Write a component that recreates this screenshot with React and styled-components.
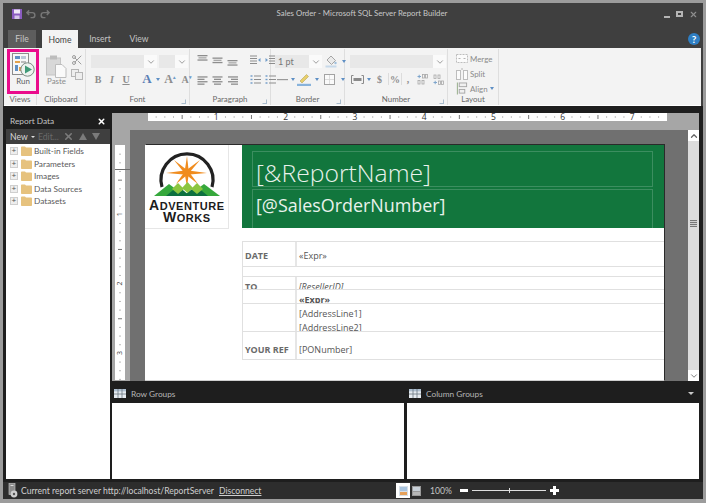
import React from 'react';
import styled, { createGlobalStyle } from 'styled-components';
import { ChevronDown, ChevronUp, Scissors, X } from 'lucide-react';

const UI_FONT = 'Lato, "Noto Sans", sans-serif';
const REPORT_FONT = '"Open Sans", "Noto Sans", sans-serif';

const GlobalStyle = createGlobalStyle`
  html, body { margin: 0; padding: 0; background: #9c9c9c; }
  * { box-sizing: border-box; }
`;

/* ---------- small drawings ---------- */

function SaveIcon() {
  return (
    <svg width="10" height="10" viewBox="0 0 10 10">
      <rect width="10" height="10" fill="#8a5cc0" />
      <rect x="2" y="0.5" width="6" height="4" fill="#efe8f7" />
      <rect x="2.5" y="6.5" width="5" height="3.5" fill="#d6c6ea" />
    </svg>
  );
}

function UndoIcon({ flip }) {
  return (
    <svg width="10" height="10" viewBox="0 0 11 10" style={flip ? { transform: 'scaleX(-1)' } : undefined}>
      <path d="M3.5 1 L1 3.5 L3.5 6 M1.5 3.5 H7 A2.7 2.7 0 0 1 7 9 H5" fill="none" stroke="#777" strokeWidth="1.6" />
    </svg>
  );
}

function RunIcon() {
  return (
    <svg width="23" height="25" viewBox="0 0 23 25">
      <rect x="0.5" y="0.5" width="16" height="21" fill="#f7f7f7" stroke="#8b8b8b" />
      <rect x="3" y="3" width="5" height="3" fill="#5f8fc4" />
      <rect x="9" y="3" width="5" height="3" fill="#b9c7d6" />
      <rect x="3" y="8" width="5" height="2" fill="#e3a24c" />
      <rect x="9" y="8" width="5" height="2" fill="#bdbdbd" />
      <rect x="3" y="12" width="3" height="6" fill="#5f8fc4" />
      <rect x="7" y="14" width="3" height="4" fill="#e3a24c" />
      <circle cx="15.5" cy="16.5" r="6.7" fill="#eef2ef" stroke="#7b8a82" />
      <path d="M13 12.5 L20 16.5 L13 20.5 Z" fill="#3f9a77" />
    </svg>
  );
}

function PasteIcon() {
  return (
    <svg width="21" height="23" viewBox="0 0 21 23">
      <rect x="0.5" y="3" width="14" height="17" fill="#d8d8d8" stroke="#c4c4c4" />
      <rect x="4" y="0.5" width="7" height="4" fill="#bdbdbd" />
      <path d="M9.5 9.5 H16 L20 13.5 V22.5 H9.5 Z" fill="#fafafa" stroke="#bdbdbd" />
    </svg>
  );
}

function CopyIcon() {
  return (
    <svg width="12" height="11" viewBox="0 0 12 11">
      <rect x="0.5" y="0.5" width="7" height="7" fill="#eee" stroke="#b5b5b5" />
      <rect x="4.5" y="3.5" width="7" height="7" fill="#eee" stroke="#b5b5b5" />
    </svg>
  );
}

function AlignIcon({ lines, align = 'left', color = '#8d8d8d' }) {
  const widths = [10, 7, 10, 7];
  return (
    <svg width="11" height="9" viewBox="0 0 11 9">
      {Array.from({ length: lines }).map((_, i) => {
        const w = widths[i];
        const x = align === 'center' ? (11 - w) / 2 : align === 'right' ? 11 - w : 0.5;
        return <rect key={i} x={x} y={i * 2.4 + 0.3} width={w} height="1.3" fill={color} />;
      })}
    </svg>
  );
}

/* vertical alignment buttons: a bar pair sitting high, centred or low in its cell */
function ValignIcon({ offset }) {
  return (
    <svg width="11" height="13" viewBox="0 0 11 13">
      <rect x="0.5" y={offset} width="10" height="1.3" fill="#8d8d8d" />
      <rect x="1.5" y={offset + 2.2} width="8" height="1.3" fill="#a8a8a8" />
      <rect x="0.5" y={offset + 4.4} width="10" height="1.3" fill="#8d8d8d" />
    </svg>
  );
}

function ListIcon({ color = '#8d8d8d' }) {
  return (
    <svg width="11" height="10" viewBox="0 0 11 10">
      {[1, 4.5, 8].map(y => (
        <g key={y}>
          <rect x="0.5" y={y - 0.7} width="2" height="1.4" fill="#6f9bc8" />
          <rect x="4" y={y - 0.5} width="7" height="1" fill={color} />
        </g>
      ))}
    </svg>
  );
}

function IndentIcon({ flip }) {
  return (
    <svg width="11" height="10" viewBox="0 0 11 10" style={flip ? { transform: 'scaleX(-1)' } : undefined}>
      {[1, 3.5, 6, 8.5].map(y => (
        <rect key={y} x="4" y={y - 0.5} width="7" height="1" fill="#8d8d8d" />
      ))}
      <path d="M0.5 3 L3 5 L0.5 7 Z" fill="#6f9bc8" />
    </svg>
  );
}

function BucketIcon() {
  return (
    <svg width="12" height="13" viewBox="0 0 12 13">
      <path d="M2 5 L6 1 L10.5 5.5 L6.5 9.5 Z" fill="#eaeaea" stroke="#a5a5a5" />
      <circle cx="10.5" cy="8" r="1.2" fill="#9fc0dd" />
      <rect x="0.5" y="10.5" width="11" height="2" fill="#c7d9ea" />
    </svg>
  );
}

function LineIcon() {
  return (
    <svg width="11" height="5" viewBox="0 0 11 5">
      <rect y="2" width="11" height="1.2" fill="#9a9a9a" />
    </svg>
  );
}

function PenIcon() {
  return (
    <svg width="14" height="13" viewBox="0 0 14 13">
      <path d="M3 8 L9.5 1.5 L11.5 3.5 L5 10 Z" fill="#e8cf6a" stroke="#b5a45c" strokeWidth="0.6" />
      <rect x="0" y="10.8" width="14" height="2.2" fill="#88b3dc" />
    </svg>
  );
}

function BoxIcon() {
  return (
    <svg width="11" height="11" viewBox="0 0 11 11">
      <rect x="0.5" y="0.5" width="10" height="10" fill="#fafafa" stroke="#a3a3a3" />
      <path d="M5.5 1 V10 M1 5.5 H10" stroke="#d6d6d6" strokeWidth="0.8" />
    </svg>
  );
}

function NumberIcon() {
  return (
    <svg width="13" height="9" viewBox="0 0 13 9">
      <path d="M2.5 0.5 H0.5 V8.5 H2.5 M10.5 0.5 H12.5 V8.5 H10.5" fill="none" stroke="#8a8a8a" />
      <rect x="2.5" y="3" width="8" height="3" fill="#8a8a8a" />
    </svg>
  );
}

function DecimalIcon({ flip }) {
  return (
    <svg width="11" height="11" viewBox="0 0 11 11" style={flip ? { transform: 'scaleY(-1)' } : undefined}>
      <path d="M0.5 2.5 H4 M2.2 0.8 V4.2" stroke="#7fa6cc" strokeWidth="1" />
      <rect x="5.5" y="0.5" width="2" height="3.5" fill="none" stroke="#a8a8a8" strokeWidth="0.8" />
      <rect x="8.5" y="0.5" width="2" height="3.5" fill="none" stroke="#a8a8a8" strokeWidth="0.8" />
      <rect x="1" y="6.5" width="2" height="3.5" fill="none" stroke="#a8a8a8" strokeWidth="0.8" />
      <rect x="5" y="6.5" width="2" height="3.5" fill="none" stroke="#a8a8a8" strokeWidth="0.8" />
    </svg>
  );
}

function MergeIcon() {
  return (
    <svg width="12" height="9" viewBox="0 0 12 9">
      <rect x="0.5" y="0.5" width="11" height="8" fill="#fbfbfb" stroke="#bdbdbd" strokeDasharray="2 1" />
      <path d="M2.5 4.5 H4.5 M9.5 4.5 H7.5" stroke="#b4b4b4" />
    </svg>
  );
}

function SplitIcon() {
  return (
    <svg width="12" height="12" viewBox="0 0 12 12">
      <rect x="0.5" y="2.5" width="4" height="9" fill="#fbfbfb" stroke="#bdbdbd" />
      <rect x="7.5" y="2.5" width="4" height="9" fill="#fbfbfb" stroke="#bdbdbd" />
      <path d="M6 0 V2" stroke="#b4b4b4" />
    </svg>
  );
}

function AlignObjectsIcon() {
  return (
    <svg width="12" height="13" viewBox="0 0 13 13">
      <rect x="3.5" y="0.5" width="8" height="4" fill="#f0f0f0" stroke="#a5a5a5" />
      <rect x="3.5" y="7.5" width="6" height="4" fill="#f0f0f0" stroke="#a5a5a5" />
      <path d="M1.5 0 V13" stroke="#8fa882" />
    </svg>
  );
}

function FolderIcon() {
  return (
    <svg width="11" height="10" viewBox="0 0 11 10">
      <path d="M0 1.2 Q0 0.4 0.8 0.4 H4 L5 1.6 H10.2 Q11 1.6 11 2.4 V9.2 Q11 10 10.2 10 H0.8 Q0 10 0 9.2 Z" fill="#e6c27e" />
    </svg>
  );
}

function GridIcon() {
  return (
    <svg width="12" height="9" viewBox="0 0 12 9">
      <rect width="12" height="9" fill="#e6ebf0" />
      <rect width="12" height="2.4" fill="#aebfd0" />
      <path d="M4 0 V9 M8 0 V9 M0 5 H12" stroke="#6b7782" strokeWidth="0.8" />
    </svg>
  );
}

function ServerIcon() {
  return (
    <svg width="10" height="15" viewBox="0 0 10 15">
      <rect x="1" y="0.5" width="6" height="11" fill="#8c8c8c" stroke="#bbb" strokeWidth="0.7" />
      <rect x="2.5" y="2" width="3" height="1" fill="#ddd" />
      <circle cx="6" cy="11" r="3.4" fill="#cfcfcf" />
      <circle cx="6" cy="11" r="1.2" fill="#555" />
    </svg>
  );
}

function PageViewIcon({ muted }) {
  return (
    <svg width="9" height="10" viewBox="0 0 9 10">
      <rect width="9" height="10" fill={muted ? '#9a9a9a' : '#d7dfe7'} />
      <rect x="1" y="1" width="7" height="4" fill={muted ? '#c8d0d8' : '#a9c4de'} />
      <rect x="1" y="6" width="7" height="3" fill={muted ? '#b8b8b8' : '#e6a15a'} />
    </svg>
  );
}

/* the ruler numbers are plain svg text so the ticks can share one coordinate system */
function TopRuler() {
  const step = 69.3 / 8;
  const marks = [];
  for (let i = 1; i < 60; i++) {
    const x = -1 + i * step;
    if (x > 512) break;
    if (i % 8 === 0) {
      marks.push(
        <text key={i} x={x} y="7.4" textAnchor="middle" fontSize="8.5" fontFamily={REPORT_FONT} fill="#333">
          {i / 8}
        </text>
      );
    } else if (i % 4 === 0) {
      marks.push(<rect key={i} x={x} y="2" width="1" height="4" fill="#777" />);
    } else {
      marks.push(<rect key={i} x={x} y="3.5" width="1" height="1" fill="#888" />);
    }
  }
  return (
    <svg width="519" height="8" viewBox="0 0 519 8">
      <rect width="519" height="8" fill="#fff" />
      {marks}
    </svg>
  );
}

function SideRuler() {
  const step = 69.3 / 8;
  const marks = [];
  for (let i = 1; i < 28; i++) {
    const y = i * step;
    if (i % 8 === 0) {
      marks.push(
        <text
          key={i}
          x="5"
          y={y + 2.5}
          textAnchor="middle"
          fontSize="7"
          fontFamily={REPORT_FONT}
          fill="#444"
          transform={`rotate(-90 5 ${y})`}
        >
          {i / 8}
        </text>
      );
    } else if (i % 4 === 0) {
      marks.push(<rect key={i} x="3" y={y} width="4" height="1" fill="#777" />);
    } else {
      marks.push(<rect key={i} x="4.5" y={y} width="1" height="1" fill="#777" />);
    }
  }
  return (
    <svg width="10" height="235" viewBox="0 0 10 235">
      <rect width="10" height="235" fill="#fff" />
      {marks}
    </svg>
  );
}

function AdventureLogo() {
  const rays = [
    [187, 156], [200, 160], [207, 173], [198, 184], [187, 187],
    [176, 184], [166, 173], [174, 160],
  ];
  const cx = 186.7;
  const cy = 172.5;
  return (
    <svg width="83" height="83" viewBox="145 145 83 83">
      <path d="M162 187 A26 26 0 1 1 212 187" fill="none" stroke="#222" strokeWidth="3.2" />
      {rays.map(([x, y]) => {
        const dx = x - cx;
        const dy = y - cy;
        const len = Math.hypot(dx, dy);
        const px = (-dy / len) * 2.2;
        const py = (dx / len) * 2.2;
        return (
          <polygon
            key={`${x}-${y}`}
            points={`${x},${y} ${cx + px},${cy + py} ${cx - px},${cy - py}`}
            fill="#f08c1e"
          />
        );
      })}
      <circle cx={cx} cy={cy} r="3.6" fill="#f08c1e" />
      <polygon points="154,196 169,184 185,196" fill="#36a83c" />
      <polygon points="188,196 204,184 220,196" fill="#36a83c" />
      <polygon points="166,196 178,186 190,196" fill="#0d7040" />
      <polygon points="183,196 196,186 208,196" fill="#0d7040" />
      <polygon points="178,183 184,189 178,194 172,189" fill="#8cc63f" />
      <polygon points="187.5,182 193,188 187.5,193 182,188" fill="#8cc63f" />
      <polygon points="197,183 203,189 197,194 191,189" fill="#8cc63f" />
      <text x="149" y="210" textLength="75" fontFamily='"Liberation Sans", sans-serif' fontWeight="700" fill="#1c1c1c">
        <tspan fontSize="14">A</tspan>
        <tspan fontSize="11">DVENTURE</tspan>
      </text>
      <text x="163" y="222" textLength="47" fontFamily='"Liberation Sans", sans-serif' fontWeight="700" fill="#1c1c1c">
        <tspan fontSize="14">W</tspan>
        <tspan fontSize="11">ORKS</tspan>
      </text>
    </svg>
  );
}

/* ---------- page ---------- */

export default function App() {
  return (
    <Root>
      <GlobalStyle />
      <Window>
        <TitleBar>
          <QuickAccess>
            <SaveIcon />
            <UndoIcon />
            <UndoIcon flip />
          </QuickAccess>
          <Title>Sales Order - Microsoft SQL Server Report Builder</Title>
          <WindowControls>
            <MinButton />
            <MaxButton />
            <X size={9} color="#8f8f8f" strokeWidth={3} />
          </WindowControls>
        </TitleBar>

        <TabStrip>
          <FileTab>File</FileTab>
          <HomeTab>Home</HomeTab>
          <PlainTab $w={44}>Insert</PlainTab>
          <PlainTab $w={34}>View</PlainTab>
          <HelpButton>?</HelpButton>
        </TabStrip>

        <Ribbon>
          <RibbonGroup $w={33} label="Views">
            <RunButton>
              <RunIcon />
              <BigLabel>Run</BigLabel>
            </RunButton>
          </RibbonGroup>

          <RibbonGroup $w={49} label="Clipboard" $left={9}>
            <PasteButton>
              <PasteIcon />
              <BigLabel $muted>Paste</BigLabel>
            </PasteButton>
            <SmallStack>
              <Scissors size={12} color="#9d9d9d" />
              <CopyIcon />
            </SmallStack>
          </RibbonGroup>

          <RibbonGroup $w={104} label="Font" $left={5} launcher>
            <ControlColumn>
              <ControlRow $gap={2}>
                <Dropdown $w={66} />
                <Dropdown $w={29} />
              </ControlRow>
              <ControlRow>
                <Tool $w={14}><b>B</b></Tool>
                <Tool $w={14}><i>I</i></Tool>
                <Tool $w={14}><u>U</u></Tool>
                <Tool $w={7} />
                <Tool $w={14} $size={13} $color="#5b7fb5">A</Tool>
                <DropArrow />
                <Tool $w={20} $size={12}>A<Sup>▴</Sup></Tool>
                <Tool $w={13} $size={10}>A<Sup>▾</Sup></Tool>
              </ControlRow>
            </ControlColumn>
          </RibbonGroup>

          <RibbonGroup $w={81} label="Paragraph" $left={5} launcher>
            <ParagraphColumn>
              <ControlRow>
                <Tool $w={15}><ValignIcon offset={1} /></Tool>
                <Tool $w={15}><ValignIcon offset={3.5} /></Tool>
                <Tool $w={15}><ValignIcon offset={6} /></Tool>
                <Tool $w={8} />
                <Tool $w={15}><IndentIcon flip /></Tool>
                <Tool $w={15}><IndentIcon /></Tool>
              </ControlRow>
              <ControlRow>
                <Tool $w={15}><AlignIcon lines={4} /></Tool>
                <Tool $w={15}><AlignIcon lines={4} align="center" /></Tool>
                <Tool $w={15}><AlignIcon lines={4} align="right" /></Tool>
                <Tool $w={8} />
                <Tool $w={15}><ListIcon /></Tool>
                <Tool $w={15}><ListIcon /></Tool>
              </ControlRow>
            </ParagraphColumn>
          </RibbonGroup>

          <RibbonGroup $w={74} label="Border" $left={4} launcher>
            <ControlColumn>
              <ControlRow $gap={3}>
                <Dropdown $w={47}>1 pt</Dropdown>
                <BucketIcon />
                <DropArrow />
              </ControlRow>
              <ControlRow>
                <Tool $w={14}><LineIcon /></Tool>
                <DropArrow />
                <Tool $w={18}><PenIcon /></Tool>
                <DropArrow />
                <Tool $w={20}><BoxIcon /></Tool>
                <DropArrow />
              </ControlRow>
            </ControlColumn>
          </RibbonGroup>

          <RibbonGroup $w={103} label="Number" $left={5} launcher>
            <ControlColumn>
              <ControlRow>
                <Dropdown $w={96} />
              </ControlRow>
              <ControlRow>
                <Tool $w={15}><NumberIcon /></Tool>
                <DropArrow />
                <Tool $w={17}>$</Tool>
                <ToolDivider />
                <Tool $w={12}>%</Tool>
                <ToolDivider />
                <Tool $w={12}>,</Tool>
                <Tool $w={17}><DecimalIcon /></Tool>
                <Tool $w={14}><DecimalIcon flip /></Tool>
              </ControlRow>
            </ControlColumn>
          </RibbonGroup>

          <RibbonGroup $w={51} label="Layout" $left={8}>
            <LayoutStack>
              <LayoutRow><IconSlot><MergeIcon /></IconSlot>Merge</LayoutRow>
              <LayoutRow><IconSlot><SplitIcon /></IconSlot>Split</LayoutRow>
              <LayoutRow><IconSlot><AlignObjectsIcon /></IconSlot>Align<DropArrow /></LayoutRow>
            </LayoutStack>
          </RibbonGroup>
        </Ribbon>

        <Body>
          <DataPanel>
            <PanelHeader>
              Report Data
              <X size={9} color="#fff" strokeWidth={4} />
            </PanelHeader>
            <PanelToolbar>
              <NewLabel>New</NewLabel>
              <DarkArrow />
              <DisabledText>Edit...</DisabledText>
              <X size={11} color="#7b7b7b" strokeWidth={3.5} />
              <StepArrow />
              <StepArrow $down />
            </PanelToolbar>
            <Tree>
              {['Built-in Fields', 'Parameters', 'Images', 'Data Sources', 'Datasets'].map(name => (
                <TreeRow key={name}>
                  <Expander>+</Expander>
                  <FolderIcon />
                  {name}
                </TreeRow>
              ))}
            </Tree>
          </DataPanel>

          <Workspace>
            <Designer>
              <TopStrip>
                <TopRuler />
              </TopStrip>
              <SideStrip>
                <SideRuler />
                <MarginMark />
              </SideStrip>
              <Canvas>
                <Page>
                  <PageHeader>
                    <LogoBox>
                      <AdventureLogo />
                    </LogoBox>
                    <Banner>
                      <NameBox>[&amp;ReportName]</NameBox>
                      <NumberBox>[@SalesOrderNumber]</NumberBox>
                    </Banner>
                  </PageHeader>
                  <InfoTable>
                    <InfoRow $h={25} $top={7}><InfoLabel>DATE</InfoLabel><InfoValue>«Expr»</InfoValue></InfoRow>
                    <InfoRow $h={10} />
                    <InfoRow $h={13} $top={3}><InfoLabel>TO</InfoLabel><InfoValue><i>[ResellerID]</i></InfoValue></InfoRow>
                    <InfoRow $h={14} $top={3}><InfoLabel /><InfoValue><b>«Expr»</b></InfoValue></InfoRow>
                    <InfoRow $h={28} $top={3}>
                      <InfoLabel />
                      <InfoValue $leading={14}>[AddressLine1]<br />[AddressLine2]</InfoValue>
                    </InfoRow>
                    <InfoRow $h={28} $top={11}><InfoLabel>YOUR REF</InfoLabel><InfoValue>[PONumber]</InfoValue></InfoRow>
                  </InfoTable>
                  <NextRow>
                    {[187, 27, 69, 55, 69, 56].map((w, i) => (
                      <NextCell key={i} $w={w} />
                    ))}
                  </NextRow>
                </Page>
              </Canvas>
              <ScrollBar>
                <ScrollButton><ChevronUp size={10} color="#666" strokeWidth={3} /></ScrollButton>
                <ScrollTrack>
                  <Grip />
                </ScrollTrack>
                <ScrollButton><ChevronDown size={10} color="#666" strokeWidth={2} /></ScrollButton>
              </ScrollBar>
            </Designer>

            <GroupPanes>
              <GroupPane>
                <GroupHeader><GridIcon />Row Groups</GroupHeader>
                <GroupBody />
              </GroupPane>
              <GroupPane>
                <GroupHeader><GridIcon />Column Groups<HeaderArrow /></GroupHeader>
                <GroupBody />
              </GroupPane>
            </GroupPanes>
          </Workspace>
        </Body>

        <StatusBar>
          <ServerIcon />
          <StatusText>Current report server http://localhost/ReportServer</StatusText>
          <StatusLink>Disconnect</StatusLink>
          <ViewToggle $active><PageViewIcon /></ViewToggle>
          <ViewToggle><PageViewIcon muted /></ViewToggle>
          <ZoomValue>100%</ZoomValue>
          <ZoomMinus />
          <ZoomTrack><ZoomThumb /></ZoomTrack>
          <ZoomPlus />
        </StatusBar>
      </Window>
    </Root>
  );
}

function RibbonGroup({ label, launcher, children, $w, $left }) {
  return (
    <GroupBox $w={$w}>
      <GroupContent $left={$left}>{children}</GroupContent>
      <GroupLabel>
        {label}
        {launcher && <Launcher />}
      </GroupLabel>
    </GroupBox>
  );
}

/* ---------- styles ---------- */

const Root = styled.div`
  width: 706px;
  height: 503px;
  padding: 3px 3px 4px 3px;
  background: #9c9c9c;
  font-family: ${UI_FONT};
  overflow: hidden;
`;

const Window = styled.div`
  height: 100%;
  display: flex;
  flex-direction: column;
  background: #3f3f3f;
`;

const TitleBar = styled.div`
  flex: 0 0 27px;
  display: flex;
  align-items: center;
  position: relative;
  padding: 0 5px 5px 9px;
`;

const QuickAccess = styled.div`
  display: flex;
  align-items: center;
  gap: 4px;
`;

const Title = styled.div`
  position: absolute;
  left: 18px;
  right: 0;
  top: 4px;
  text-align: center;
  font-size: 7.8px;
  line-height: 12px;
  color: #c9c9c9;
`;

const WindowControls = styled.div`
  margin-left: auto;
  display: flex;
  align-items: center;
  gap: 6px;
`;

const MinButton = styled.div`
  width: 6px;
  height: 2px;
  margin-top: 5px;
  background: #b5b5b5;
`;

const MaxButton = styled.div`
  width: 7px;
  height: 6px;
  border: 2px solid #b5b5b5;
`;

const TabStrip = styled.div`
  flex: 0 0 18px;
  display: flex;
  align-items: stretch;
  padding: 0 3px 0 5px;
  font-size: 8.6px;
`;

const FileTab = styled.div`
  width: 28px;
  display: flex;
  align-items: center;
  justify-content: center;
  background: #5d5d5d;
  color: #c7c7c7;
`;

const HomeTab = styled.div`
  width: 36px;
  margin: 0 0 -1px 6px;
  display: flex;
  align-items: center;
  justify-content: center;
  background: #f3f3f3;
  color: #444;
`;

const PlainTab = styled.div`
  width: ${p => p.$w}px;
  display: flex;
  align-items: center;
  justify-content: center;
  color: #c4c4c4;
`;

const HelpButton = styled.div`
  width: 12px;
  height: 12px;
  margin: 3px 0 0 auto;
  border-radius: 50%;
  background: #2f7fc4;
  color: #fff;
  font-size: 10px;
  font-weight: 700;
  line-height: 12px;
  text-align: center;
`;

const Ribbon = styled.div`
  flex: 0 0 58px;
  min-height: 0;
  margin: 0 2px 0 1px;
  display: flex;
  background: #f3f3f3;
  border-bottom: 1px solid #fff;
  padding-top: 1px;
`;

const GroupBox = styled.div`
  width: ${p => p.$w}px;
  min-height: 0;
  display: flex;
  flex-direction: column;
  border-right: 1px solid #dedede;
`;

const GroupContent = styled.div`
  flex: 1;
  min-height: 0;
  display: flex;
  padding-left: ${p => p.$left || 0}px;
  padding-top: 5px;
`;

const GroupLabel = styled.div`
  flex: 0 0 10px;
  position: relative;
  text-align: center;
  font-size: 7.9px;
  line-height: 11px;
  color: #6a6a6a;
`;

const Launcher = styled.span`
  position: absolute;
  right: 3px;
  bottom: 1px;
  width: 5px;
  height: 5px;
  border: 1px solid #a9bccd;
  border-top-color: transparent;
  border-left-color: transparent;
`;

const RunButton = styled.div`
  width: 32px;
  height: 45px;
  margin: -5px 0 0 3px;
  border: 3px solid #ea0c8c;
  display: flex;
  flex-direction: column;
  align-items: center;
  padding-top: 1px;
  flex-shrink: 0;
  position: relative;
  z-index: 1;
`;

const BigLabel = styled.span`
  font-size: 7.9px;
  line-height: 11px;
  margin-top: -2px;
  color: ${p => (p.$muted ? '#8b8b8b' : '#5c5c5c')};
`;

const PasteButton = styled.div`
  width: 21px;
  margin-top: 1px;
  display: flex;
  flex-direction: column;
  align-items: center;
`;

const SmallStack = styled.div`
  margin-left: 4px;
  display: flex;
  flex-direction: column;
  gap: 3px;
`;

const ControlColumn = styled.div`
  display: flex;
  flex-direction: column;
  gap: 4px;
  padding-top: 1px;
`;

const ParagraphColumn = styled.div`
  display: flex;
  flex-direction: column;
  gap: 6px;
  margin-top: -1px;
`;

const ControlRow = styled.div`
  display: flex;
  align-items: center;
  gap: ${p => p.$gap || 0}px;
  min-height: 13px;
`;

const DropdownBox = styled.div`
  width: ${p => p.$w}px;
  height: 13px;
  display: flex;
  justify-content: space-between;
  background: #e8e8e8;
  font-size: 9px;
  line-height: 13px;
  color: #777;
  padding-left: 3px;
`;

const DropdownChevron = styled.span`
  width: 13px;
  display: flex;
  align-items: center;
  justify-content: center;
  background: #fafafa;
`;

function Dropdown({ $w, children }) {
  return (
    <DropdownBox $w={$w}>
      <span>{children}</span>
      <DropdownChevron>
        <ChevronDown size={10} color="#8c8c8c" strokeWidth={2} />
      </DropdownChevron>
    </DropdownBox>
  );
}

const Tool = styled.div`
  width: ${p => p.$w}px;
  height: 14px;
  display: flex;
  align-items: center;
  justify-content: center;
  font-family: "Liberation Serif", serif;
  font-size: ${p => p.$size || 10}px;
  font-weight: 700;
  color: ${p => p.$color || '#8e8e8e'};
  i, u, b { font-weight: 700; }
`;

const Sup = styled.span`
  font-size: 5px;
  color: #6f9bc8;
  margin-bottom: 5px;
`;

const DropArrow = styled.span`
  display: inline-block;
  width: 0;
  height: 0;
  margin-left: 2px;
  border: 2px solid transparent;
  border-top: 3px solid #5e8fc4;
  border-bottom: 0;
  flex-shrink: 0;
`;

const ToolDivider = styled.span`
  width: 1px;
  height: 12px;
  background: #dcdcdc;
`;

const LayoutStack = styled.div`
  display: flex;
  flex-direction: column;
  margin-top: -3px;
`;

const LayoutRow = styled.div`
  flex: 0 0 15px;
  display: flex;
  align-items: center;
  font-size: 7.9px;
  color: #8a8a8a;
  white-space: nowrap;
`;

const IconSlot = styled.span`
  width: 14px;
  flex-shrink: 0;
  display: flex;
  align-items: center;
  justify-content: flex-start;
`;

const Body = styled.div`
  flex: 1;
  min-height: 0;
  display: flex;
  gap: 2px;
  padding: 7px 4px 3px 3px;
  background: #1e1e1e;
`;

const DataPanel = styled.div`
  width: 104px;
  display: flex;
  flex-direction: column;
`;

const PanelHeader = styled.div`
  flex: 0 0 16px;
  display: flex;
  align-items: center;
  justify-content: space-between;
  padding: 0 4px 0 4px;
  font-size: 8.3px;
  color: #c4c4c4;
`;

const PanelToolbar = styled.div`
  flex: 0 0 15px;
  display: flex;
  align-items: center;
  gap: 4px;
  padding-left: 4px;
  background: #3f3f3f;
  font-size: 8.6px;
  color: #d8d8d8;
`;

const NewLabel = styled.span`
  width: 16px;
`;

const DarkArrow = styled.span`
  width: 0;
  height: 0;
  margin-left: 1px;
  border: 2px solid transparent;
  border-top: 2px solid #ddd;
  border-bottom: 0;
`;

const DisabledText = styled.span`
  width: 20px;
  margin: 0 1px 0 -1px;
  color: #6a6a6a;
`;

const StepArrow = styled.span`
  width: 0;
  height: 0;
  margin-left: 1px;
  border-left: 4px solid transparent;
  border-right: 4px solid transparent;
  ${p => (p.$down ? 'border-top: 7px solid #7b7b7b;' : 'border-bottom: 7px solid #7b7b7b;')}
`;

const Tree = styled.div`
  flex: 1;
  background: #fff;
  padding: 1px 0 0 3px;
`;

const TreeRow = styled.div`
  height: 12.5px;
  display: flex;
  align-items: center;
  font-size: 8.3px;
  color: #5a5a5a;
  white-space: nowrap;
  svg { margin: 0 2px 0 3px; }
`;

const Expander = styled.span`
  width: 8px;
  height: 8px;
  margin-left: 1px;
  border: 1px solid #cfcfcf;
  background: #eee;
  font-size: 8px;
  line-height: 5px;
  text-align: center;
  color: #555;
  font-family: "Liberation Mono", monospace;
`;

const Workspace = styled.div`
  flex: 1;
  min-width: 0;
  display: flex;
  flex-direction: column;
`;

const Designer = styled.div`
  flex: 0 0 268px;
  display: grid;
  grid-template-columns: 18px 558px 11px;
  grid-template-rows: 17px 1fr;
  min-height: 0;
`;

const TopStrip = styled.div`
  grid-column: 1 / 4;
  background: #a6a6a6;
  padding: 0 0 0 36px;
  svg { display: block; }
`;

const SideStrip = styled.div`
  background: #a6a6a6;
  padding: 15px 0 0 3px;
  position: relative;
  overflow: hidden;
  svg { display: block; }
`;

const MarginMark = styled.div`
  position: absolute;
  left: 3px;
  right: 0;
  top: 39px;
  height: 1px;
  background: #6c6c6c;
`;

const Canvas = styled.div`
  background: #707070;
  padding: 15px 0 0 15px;
  overflow: hidden;
`;

const Page = styled.div`
  width: 519px;
  height: 236px;
  background: #fff;
  overflow: hidden;
  box-shadow: 1px -1px 0 #2a2a2a;
  font-family: ${REPORT_FONT};
`;

const PageHeader = styled.div`
  display: flex;
  gap: 13px;
  height: 83px;
`;

const LogoBox = styled.div`
  width: 84px;
  height: 84px;
  border-right: 1px solid #e6e6e6;
  border-bottom: 1px solid #e6e6e6;
  flex-shrink: 0;
  svg { display: block; }
`;

const Banner = styled.div`
  flex: 1;
  background: #12763d;
  padding: 6px 11px 0 10px;
  color: #e9f2ec;
`;

const NameBox = styled.div`
  height: 36px;
  border: 1px solid rgba(255, 255, 255, 0.18);
  margin-bottom: 2px;
  padding-left: 3px;
  font-size: 24.7px;
  font-weight: 300;
  line-height: 41px;
  overflow: hidden;
  white-space: nowrap;
`;

const NumberBox = styled.div`
  height: 39px;
  border: 1px solid rgba(255, 255, 255, 0.18);
  border-bottom: 0;
  padding-left: 3px;
  font-size: 17.9px;
  line-height: 30px;
  white-space: nowrap;
`;

const InfoTable = styled.div`
  margin: 13px 0 0 97px;
  border-top: 1px solid #e0e0e0;
  border-left: 1px solid #e0e0e0;
`;

const InfoRow = styled.div`
  height: ${p => p.$h}px;
  display: grid;
  grid-template-columns: 54px 1fr;
  border-bottom: 1px solid #e0e0e0;
  overflow: hidden;
  & > * { padding-top: ${p => p.$top || 0}px; }
`;

const InfoLabel = styled.div`
  padding-left: 2px;
  border-right: 2px solid #e6e6e6;
  font-size: 9px;
  font-weight: 700;
  line-height: 13px;
  color: #6a6a6a;
  white-space: nowrap;
`;

const InfoValue = styled.div`
  padding-left: 2px;
  font-size: 9px;
  line-height: ${p => p.$leading || 13}px;
  color: #555;
  white-space: nowrap;
`;

const NextRow = styled.div`
  margin-top: 20px;
  height: 3px;
  display: flex;
  border-top: 1px solid #cfcfcf;
`;

const NextCell = styled.div`
  width: ${p => p.$w}px;
  border-right: 1px solid #cfcfcf;
`;

const ScrollBar = styled.div`
  background: #dcdcdc;
  display: flex;
  flex-direction: column;
`;

const ScrollButton = styled.div`
  flex: 0 0 11px;
  display: flex;
  align-items: center;
  justify-content: center;
  background: #fff;
`;

const ScrollTrack = styled.div`
  flex: 1;
  display: flex;
  align-items: center;
  justify-content: center;
  padding-bottom: 65px;
`;

const Grip = styled.div`
  width: 7px;
  height: 7px;
  background: repeating-linear-gradient(#777 0 1px, #cfcfcf 1px 2px);
`;

const GroupPanes = styled.div`
  flex: 1;
  min-height: 0;
  display: grid;
  grid-template-columns: 292px 1fr;
  gap: 3px;
`;

const GroupPane = styled.div`
  display: flex;
  flex-direction: column;
`;

const GroupHeader = styled.div`
  flex: 0 0 22px;
  display: flex;
  align-items: center;
  gap: 5px;
  padding: 3px 5px 0 2px;
  font-size: 8.3px;
  color: #b5b5b5;
`;

const HeaderArrow = styled.span`
  margin-left: auto;
  width: 0;
  height: 0;
  border: 3px solid transparent;
  border-top: 3px solid #c8c8c8;
  border-bottom: 0;
`;

const GroupBody = styled.div`
  flex: 1;
  background: #fff;
`;

const StatusBar = styled.div`
  flex: 0 0 17px;
  display: flex;
  align-items: center;
  padding-left: 5px;
  background: #2d2d2d;
  font-size: 8.6px;
  color: #cfcfcf;
  white-space: nowrap;
`;

const StatusText = styled.span`
  width: 198px;
  margin-left: 3px;
`;

const StatusLink = styled.span`
  width: 177px;
  text-decoration: underline;
`;

const ViewToggle = styled.div`
  width: ${p => (p.$active ? 14 : 13)}px;
  height: 15px;
  display: flex;
  align-items: center;
  justify-content: center;
  background: ${p => (p.$active ? '#fff' : 'transparent')};
`;

const ZoomValue = styled.span`
  margin-left: 7px;
  width: 30px;
  color: #c4c4c4;
`;

const ZoomMinus = styled.span`
  width: 8px;
  height: 3px;
  background: #fff;
`;

const ZoomTrack = styled.div`
  width: 74px;
  height: 1px;
  margin: 0 4px;
  background: #dedede;
  display: flex;
  justify-content: center;
  align-items: center;
`;

const ZoomThumb = styled.span`
  width: 1px;
  height: 5px;
  background: #dedede;
`;

const ZoomPlus = styled.span`
  width: 9px;
  height: 9px;
  background:
    linear-gradient(#fff, #fff) center / 9px 3px no-repeat,
    linear-gradient(#fff, #fff) center / 3px 9px no-repeat;
`;
